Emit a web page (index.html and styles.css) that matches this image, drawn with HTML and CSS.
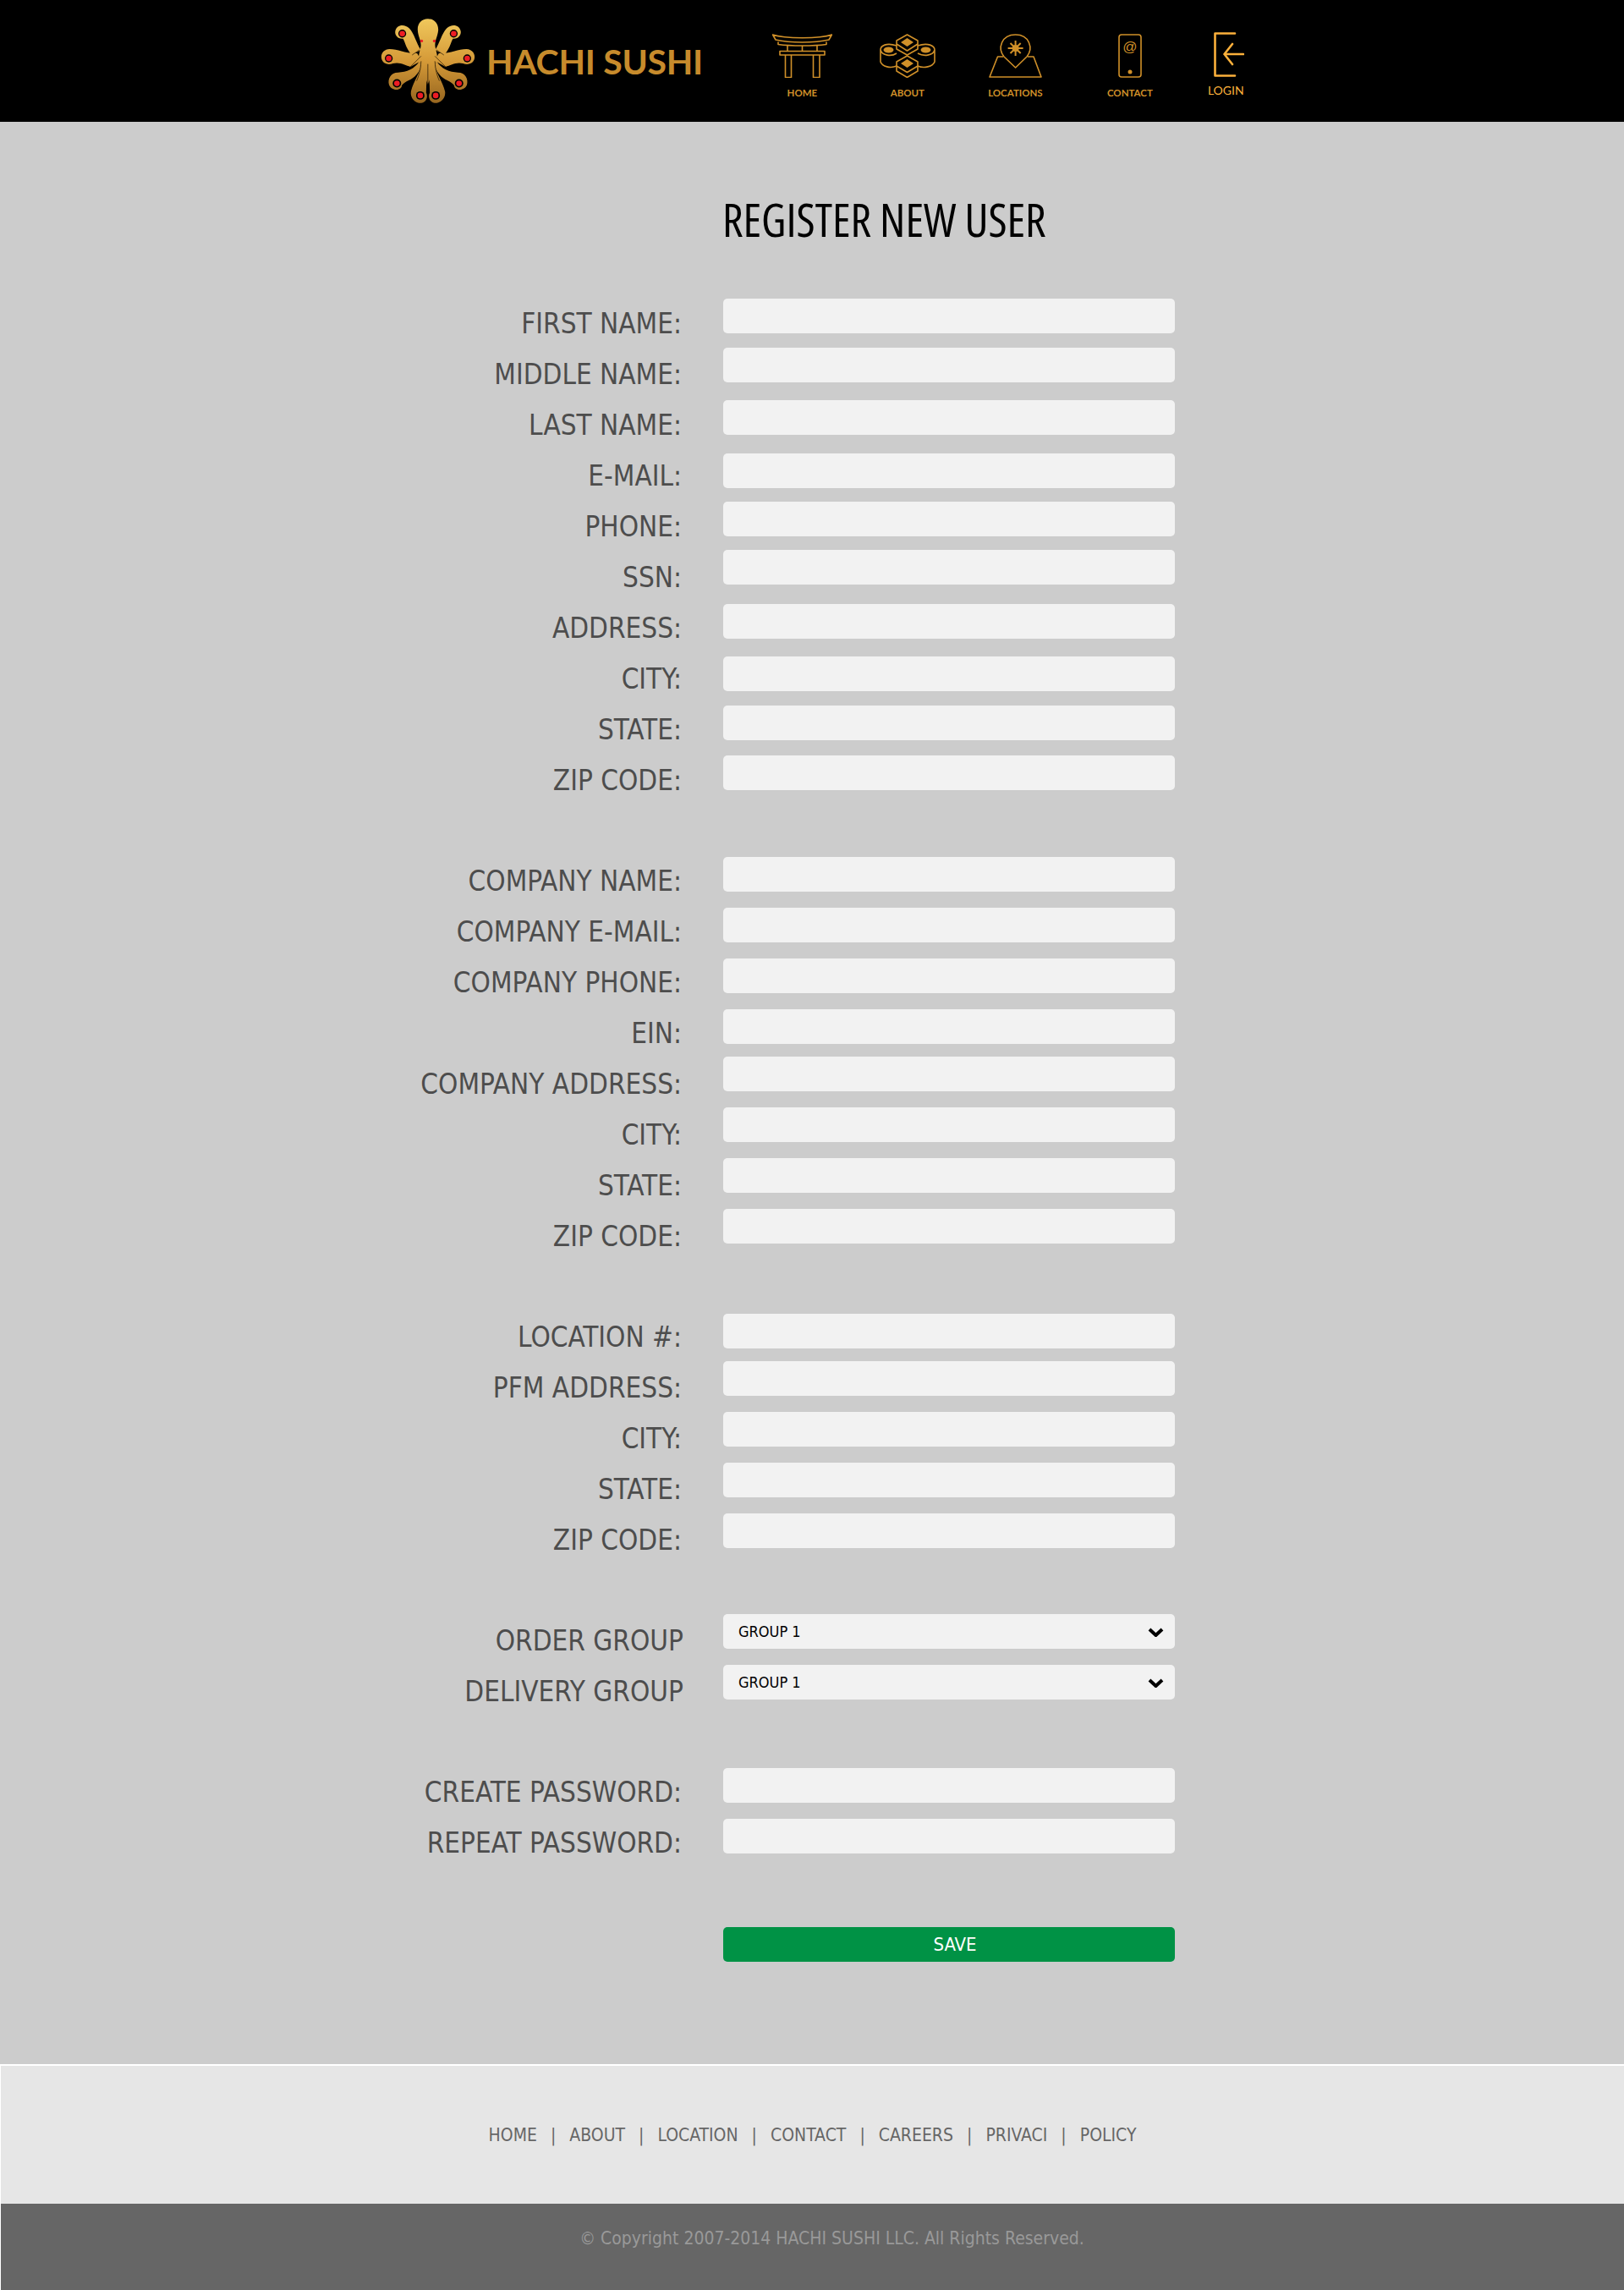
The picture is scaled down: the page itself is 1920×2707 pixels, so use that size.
FILE: index.html
```html
<!DOCTYPE html>
<html lang="en">
<head>
<meta charset="utf-8">
<title>Register New User - Hachi Sushi</title>
<link rel="stylesheet" href="styles.css">
</head>
<body>
<svg class="defs" width="0" height="0" aria-hidden="true">
  <defs>
    <linearGradient id="gold" gradientUnits="userSpaceOnUse" x1="0" y1="67" x2="0" y2="368">
      <stop offset="0" stop-color="#f0c85c"/>
      <stop offset="0.5" stop-color="#d59a38"/>
      <stop offset="1" stop-color="#96651f"/>
    </linearGradient>
    <g id="arm">
      <path d="M203 178C186 152 180 120 162 101C146 85 116 86 112 112C110 127 122 140 140 138C147 150 152 178 172 196Z"/>
      <path d="M190 190C150 192 122 175 92 175C70 175 58 195 64 212C70 228 88 233 104 226C128 220 148 232 166 238L205 216Z"/>
      <path d="M198 218C182 245 152 258 122 258C96 258 84 282 90 302C97 320 122 326 134 310C136 292 165 288 182 272C192 262 200 250 204 236Z"/>
      <path d="M208 215C202 260 176 292 168 325C164 350 184 368 205 367C222 365 230 345 222 330C222 298 226 260 230 225Z"/>
    </g>
    <g id="tips">
      <circle cx="137" cy="120" r="14"/><circle cx="89" cy="208" r="14"/><circle cx="118" cy="297" r="15"/><circle cx="201" cy="340" r="15"/>
    </g>
    <g id="dots">
      <circle cx="137" cy="120" r="10"/><circle cx="89" cy="208" r="10"/><circle cx="118" cy="297" r="10"/><circle cx="201" cy="340" r="10"/>
    </g>
  </defs>
</svg>

<header class="top">
  <a class="brand" href="#">
    <svg class="octopus" viewBox="60 64 340 306" width="113" height="102" aria-hidden="true">
      <g fill="url(#gold)">
        <use href="#arm"/>
        <use href="#arm" transform="matrix(-1 0 0 1 457 0)"/>
        <path d="M228 67C205 67 190 85 192 108C193 130 205 145 203 165C200 185 190 200 200 225L228 300L257 225C267 200 257 185 254 165C252 145 263 130 265 108C266 85 251 67 228 67Z"/>
      </g>
      <g fill="#000">
        <use href="#tips"/>
        <use href="#tips" transform="matrix(-1 0 0 1 457 0)"/>
      </g>
      <g fill="#ed1c24">
        <use href="#dots"/>
        <use href="#dots" transform="matrix(-1 0 0 1 457 0)"/>
        <circle cx="206" cy="146" r="5"/>
        <circle cx="251" cy="146" r="5"/>
      </g>
      <g fill="none" stroke="#1a0f00" stroke-width="2">
        <path d="M172 196L198 178M285 196L259 178M166 238L204 200M291 238L253 200M204 218C202 250 196 270 188 288M228 228V305M253 218C255 250 261 270 269 288"/>
      </g>
    </svg>
    <span class="brand-name">HACHI SUSHI</span>
  </a>
  <nav class="nav">
    <a class="nav-item nav-home" href="#">
      <svg class="icon" viewBox="0 0 71 52" width="71" height="52" aria-hidden="true">
        <path d="M0.5 1C15 6 56 6 70.500 1L67 7C50 11 21 11 4 7Z"/>
        <path d="M7 9.500V12.500C22 14.500 49 14.500 64 12.500V9.500"/>
        <path d="M18 14V20M35.500 14V20M53 14V20"/>
        <path d="M9 20.500H62V25H9Z"/>
        <path d="M15.500 25V51.500H22.500V25M48.500 25V51.500H56V25"/>
      </svg>
      <span class="nav-label">HOME</span>
    </a>
    <a class="nav-item nav-about" href="#">
      <svg class="icon" viewBox="0 0 66 52" width="66" height="52" aria-hidden="true">
        <path d="M32.500 1L45 8V18L32.500 25L20 18V8Z"/>
        <path d="M20 12L32.500 20L45 12"/>
        <path class="solid" d="M32.500 5L40 10L32.500 15L25 10Z"/>
        <path d="M32.500 26L45 33V44L32.500 51.500L20 44V33Z"/>
        <path d="M20 38L32.500 45.500L45 38"/>
        <path class="solid" d="M32.500 30L40 35L32.500 40L25 35Z"/>
        <path d="M20 14C8 10 1 14 1 19V33C3 39 13 41 20 38M1 19C3 26 14 27 20 23"/>
        <ellipse class="solid" cx="10.500" cy="19" rx="6" ry="3.500"/>
        <path d="M45 14C57 10 65 14 65 19V33C63 39 52 41 45 38M65 19C63 26 52 27 45 23"/>
        <ellipse class="solid" cx="54.500" cy="19" rx="6" ry="3.500"/>
      </svg>
      <span class="nav-label">ABOUT</span>
    </a>
    <a class="nav-item nav-loc" href="#">
      <svg class="icon" viewBox="0 0 63 52" width="63" height="52" aria-hidden="true">
        <path d="M31.600 40L18 27C10 17 15 1 31.600 1C48 1 53 17 45 27Z"/>
        <path d="M17 27H10.500L1 51H62L53 27H46"/>
        <path class="ray" d="M31.600 8V26M22.600 17H40.600M25.500 11L37.700 23M37.700 11L25.500 23"/>
        <circle class="solid" cx="31.600" cy="17" r="4"/>
      </svg>
      <span class="nav-label">LOCATIONS</span>
    </a>
    <a class="nav-item nav-contact" href="#">
      <svg class="icon" viewBox="0 0 28 52" width="28" height="52" aria-hidden="true">
        <rect x="1" y="1" width="26" height="50" rx="3"/>
        <text class="at" x="14" y="20.500" text-anchor="middle">@</text>
        <circle class="solid" cx="14" cy="45" r="2.500"/>
      </svg>
      <span class="nav-label">CONTACT</span>
    </a>
    <a class="nav-item nav-login" href="#">
      <svg class="icon" viewBox="0 0 36 53" width="36" height="53" aria-hidden="true">
        <path d="M25 1.500H1.500V51.500H25"/>
        <path d="M35 26H12.500M22 14L12.500 26L22 38"/>
      </svg>
      <span class="nav-label">LOGIN</span>
    </a>
  </nav>
</header>

<main class="main">
  <h1 class="title">REGISTER NEW USER</h1>
  <form class="form">
    <div class="labels">
      <label>FIRST NAME:</label>
      <label>MIDDLE NAME:</label>
      <label>LAST NAME:</label>
      <label>E-MAIL:</label>
      <label>PHONE:</label>
      <label>SSN:</label>
      <label>ADDRESS:</label>
      <label>CITY:</label>
      <label>STATE:</label>
      <label>ZIP CODE:</label>
      <label class="group-start">COMPANY NAME:</label>
      <label>COMPANY E-MAIL:</label>
      <label>COMPANY PHONE:</label>
      <label>EIN:</label>
      <label>COMPANY ADDRESS:</label>
      <label>CITY:</label>
      <label>STATE:</label>
      <label>ZIP CODE:</label>
      <label class="group-start">LOCATION #:</label>
      <label>PFM ADDRESS:</label>
      <label>CITY:</label>
      <label>STATE:</label>
      <label>ZIP CODE:</label>
      <label class="group-start plain">ORDER GROUP</label>
      <label class="plain">DELIVERY GROUP</label>
      <label class="group-start">CREATE PASSWORD:</label>
      <label>REPEAT PASSWORD:</label>
    </div>
    <div class="fields">
      <input class="field" type="text">
      <input class="field g17" type="text">
      <input class="field g21" type="text">
      <input class="field g22" type="text">
      <input class="field g16" type="text">
      <input class="field g16" type="text">
      <input class="field g23" type="text">
      <input class="field g21" type="text">
      <input class="field g17" type="text">
      <input class="field g18" type="text">
      <input class="field g79" type="text">
      <input class="field g19" type="text">
      <input class="field g19" type="text">
      <input class="field g19" type="text">
      <input class="field g15" type="text">
      <input class="field g19" type="text">
      <input class="field g19" type="text">
      <input class="field g19" type="text">
      <input class="field g83" type="text">
      <input class="field g15" type="text">
      <input class="field g19" type="text">
      <input class="field g19" type="text">
      <input class="field g19" type="text">
      <div class="select-wrap g78">
        <select class="field select"><option>GROUP 1</option></select>
        <svg class="chevron" viewBox="0 0 19 11" width="19" height="11" aria-hidden="true"><path d="M2 2L9.500 9L17 2"/></svg>
      </div>
      <div class="select-wrap g19">
        <select class="field select"><option>GROUP 1</option></select>
        <svg class="chevron" viewBox="0 0 19 11" width="19" height="11" aria-hidden="true"><path d="M2 2L9.500 9L17 2"/></svg>
      </div>
      <input class="field g81" type="password">
      <input class="field g19" type="password">
      <button class="save g87" type="button">SAVE</button>
    </div>
  </form>
</main>

<footer class="footer">
  <div class="footer-links">
    <a href="#">HOME</a><span>|</span>
    <a href="#">ABOUT</a><span>|</span>
    <a href="#">LOCATION</a><span>|</span>
    <a href="#">CONTACT</a><span>|</span>
    <a href="#">CAREERS</a><span>|</span>
    <a href="#">PRIVACI</a><span>|</span>
    <a href="#">POLICY</a>
  </div>
  <div class="copyright">© Copyright 2007-2014 HACHI SUSHI LLC. All Rights Reserved.</div>
</footer>
</body>
</html>
```

FILE: styles.css
```css
* { box-sizing: border-box; }
html, body { margin: 0; padding: 0; }
body {
  background: #ccc;
  font-family: "DejaVu Sans", sans-serif;
  font-stretch: condensed;
}
a { color: inherit; text-decoration: none; }
.defs { position: absolute; }

/* Header */
.top {
  height: 144px;
  background: #000;
  display: flex;
  align-items: flex-start;
  padding-left: 450px;
}
.brand { display: flex; align-items: flex-start; padding-top: 21px; }
.octopus { display: block; }
.brand-name {
  font-family: Lato, sans-serif;
  font-stretch: normal;
  font-weight: 700;
  font-size: 41px;
  line-height: 48px;
  letter-spacing: -0.3px;
  color: #c78b2c;
  margin: 28px 0 0 12px;
  white-space: nowrap;
}
.nav {
  display: flex;
  align-items: flex-start;
  margin-left: 82px;
  padding-top: 40px;
}
.nav-item {
  display: flex;
  flex-direction: column;
  align-items: center;
  color: #d09029;
}
.icon {
  display: block;
  fill: none;
  stroke: currentColor;
  stroke-width: 1.6;
  stroke-linejoin: round;
}
.icon .solid { fill: currentColor; stroke: none; }
.icon .ray { stroke-width: 2; }
.icon .at {
  fill: currentColor;
  stroke: none;
  font-size: 17px;
  font-family: "Liberation Sans", sans-serif;
}
.nav-label {
  font-family: Lato, sans-serif;
  font-stretch: normal;
  font-size: 11.500px;
  font-weight: 700;
  line-height: 14px;
  margin-top: 11px;
  white-space: nowrap;
}
.nav-home { width: 71px; }
.nav-about { width: 66px; margin-left: 56px; }
.nav-loc { width: 63px; margin-left: 63px; }
.nav-contact { width: 28px; margin-left: 90px; }
.nav-login {
  width: 38px;
  margin-left: 78px;
  margin-top: -2px;
  color: #fbb03b;
  align-items: flex-start;
}
.nav-login .icon { margin-left: 7px; stroke-width: 2.600; stroke-linecap: round; }
.nav-login .nav-label { font-weight: 400; font-size: 14px; margin-top: 9px; }

/* Main */
.main { height: 2296px; padding-left: 440px; padding-top: 80px; }
.title {
  margin: 0 0 0 414px;
  font-family: "Open Sans", sans-serif;
  font-stretch: condensed;
  font-weight: 400;
  font-size: 54px;
  line-height: 70px;
  color: #000;
  white-space: nowrap;
}
.form {
  display: grid;
  grid-template-columns: 366px 534px;
  column-gap: 49px;
  margin-top: 59px;
}
.labels { display: flex; flex-direction: column; align-items: flex-end; padding-top: 0; }
.labels label {
  font-size: 33px;
  line-height: 60px;
  height: 60px;
  color: #4d4d4d;
  white-space: nowrap;
}
.labels .group-start { margin-top: 59px; }
.labels .plain { margin-right: -2px; }
.fields { display: flex; flex-direction: column; }
.field {
  display: block;
  width: 534px;
  height: 41px;
  border: 0;
  border-radius: 5px;
  background: #f2f2f2;
  padding: 0;
  font-family: inherit;
  font-stretch: inherit;
}
.select-wrap { position: relative; width: 534px; height: 41px; }
.select {
  appearance: none;
  padding-left: 18px;
  font-size: 18px;
  color: #000;
}
.chevron {
  position: absolute;
  right: 13px;
  top: 16px;
  fill: none;
  stroke: #000;
  stroke-width: 4;
  stroke-linejoin: miter;
}
.save {
  display: block;
  width: 534px;
  height: 41px;
  border: 0;
  border-radius: 5px;
  background: #009245;
  color: #fff;
  font-family: inherit;
  font-stretch: inherit;
  font-size: 22px;
  padding: 0 0 0 14px;
}
.g15 { margin-top: 15px; }
.g16 { margin-top: 16px; }
.g17 { margin-top: 17px; }
.g18 { margin-top: 18px; }
.g19 { margin-top: 19px; }
.g21 { margin-top: 21px; }
.g22 { margin-top: 22px; }
.g23 { margin-top: 23px; }
.g78 { margin-top: 78px; }
.g79 { margin-top: 79px; }
.g81 { margin-top: 81px; }
.g83 { margin-top: 83px; }
.g87 { margin-top: 87px; }

/* Footer */
.footer {
  height: 267px;
  border-top: 2px solid #fff;
  border-left: 1px solid #fff;
}
.footer-links {
  height: 163px;
  background: #e6e6e6;
  display: flex;
  justify-content: center;
  align-items: center;
  gap: 16px;
  font-size: 21px;
  color: #666;
  padding-top: 0;
}
.copyright {
  height: 102px;
  background: #666;
  color: #999;
  font-size: 21px;
  line-height: 28px;
  padding: 27px 0 0 46px;
  text-align: center;
}
```
